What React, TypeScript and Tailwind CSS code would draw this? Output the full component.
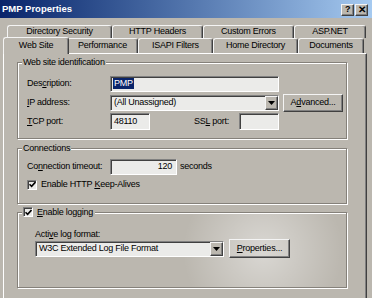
import React from 'react';

const raised = "border border-t-[#f4f4f4] border-l-[#f4f4f4] border-r-[#404040] border-b-[#404040] shadow-[inset_-1px_-1px_0_#808080]";
const sunken = "border border-t-[#808080] border-l-[#808080] border-r-white border-b-white shadow-[inset_1px_1px_0_#404040] bg-[#ebebe9]";

const U = ({ children }: { children: React.ReactNode }) => <span className="underline underline-offset-[1px]">{children}</span>;

const Arrow = () => (
    <div className={`${raised} w-[13px] h-full bg-[#bbb7af] flex items-center justify-center`}>
        <svg width="7" height="4" viewBox="0 0 7 4"><path d="M0 0h7L3.5 4z" fill="#000" /></svg>
    </div>
);

const Check = () => (
    <div className={`${sunken} w-[10px] h-[10px] flex items-center justify-center shrink-0`}>
        <svg width="7" height="7" viewBox="0 0 7 7"><path d="M0.5 3.2 L2.6 5.3 L6.5 1" stroke="#000" strokeWidth="1.6" fill="none" /></svg>
    </div>
);

const Tab = ({ label, w, h = "h-[13px]" }: { label: string, w: string, h?: string }) => (
    <div className={`${w} ${h} border-t border-l border-[#f4f4f4] border-r border-r-[#404040] rounded-t-[3px] shadow-[inset_-1px_0_0_#808080] flex items-center justify-center`}>
        {label}
    </div>
);

const Group = ({ label, h, className = "", children }: any) => (
    <div className={`relative w-[330px] ${h} border border-[#85817a] shadow-[inset_1px_1px_0_#fff,1px_1px_0_#fff] ${className}`}>
        <div className="absolute left-[4px] -top-[7px] px-[1px] bg-[#bbb7af] leading-[12px] flex items-center gap-[4px]">{label}</div>
        {children}
    </div>
);

export default function App() {
    return (
        <div className="w-[372px] h-[298px] overflow-hidden bg-[#bbb7af] text-black text-[9px] tracking-[-0.25px] font-['Liberation_Sans',Arial,sans-serif]">
            <div className="h-[18px] bg-gradient-to-r from-[#0a246a] to-[#a6caf0] flex items-center justify-between pl-[2px] pr-[4px]">
                <span className="text-white font-bold text-[9.5px] tracking-normal">PMP Properties</span>
                <div className="flex gap-[1px] pt-[1px]">
                    <div className={`${raised} bg-[#bbb7af] w-[13px] h-[12px] flex items-center justify-center font-bold text-[9px] leading-none`}>?</div>
                    <div className={`${raised} bg-[#bbb7af] w-[13px] h-[12px] flex items-center justify-center font-bold text-[10px] leading-none`}>✕</div>
                </div>
            </div>

            <div className="flex ml-[7px] mt-[7px]">
                <Tab label="Directory Security" w="w-[105px]" />
                <Tab label="HTTP Headers" w="w-[91px]" />
                <Tab label="Custom Errors" w="w-[91px]" />
                <Tab label="ASP.NET" w="w-[72px]" />
            </div>
            <div className="flex items-end h-[15px] ml-[3px]">
                <div className="relative z-10 w-[66px] h-[17px] -mb-[1px] -mr-[2px] bg-[#bbb7af] border-t border-l border-[#f4f4f4] border-r border-r-[#404040] rounded-t-[3px] shadow-[inset_-1px_0_0_#808080] flex items-center justify-center pb-[1px]">
                    Web Site
                </div>
                <Tab label="Performance" w="w-[71px]" h="h-[15px]" />
                <Tab label="ISAPI Filters" w="w-[75px]" h="h-[15px]" />
                <Tab label="Home Directory" w="w-[85px]" h="h-[15px]" />
                <Tab label="Documents" w="w-[66px]" h="h-[15px]" />
            </div>

            <div className="ml-[3px] w-[364px] h-[260px] border-t border-l border-white border-r border-r-[#404040] shadow-[inset_-1px_0_0_#808080] pl-[13px] pt-[8px]">
                <Group label="Web site identification" h="h-[77px]">
                    <div className="pt-[11px] pl-[9px]">
                        <div className="flex items-center h-[19px]">
                            <div className="w-[83px]">Des<U>c</U>ription:</div>
                            <div className={`${sunken} w-[169px] h-[16px] flex items-center pl-[2px]`}>
                                <span className="bg-[#0a246a] text-white leading-[11px] px-[1px]">PMP</span>
                            </div>
                        </div>
                        <div className="flex items-center h-[19px]">
                            <div className="w-[83px]"><U>I</U>P address:</div>
                            <div className={`${sunken} w-[169px] h-[16px] flex items-center justify-between`}>
                                <span className="pl-[3px]">(All Unassigned)</span>
                                <Arrow />
                            </div>
                            <div className={`${raised} ml-[4px] w-[60px] h-[18px] flex items-center justify-center`}>A<U>d</U>vanced...</div>
                        </div>
                        <div className="flex items-center h-[19px]">
                            <div className="w-[83px]"><U>T</U>CP port:</div>
                            <div className={`${sunken} w-[40px] h-[17px] flex items-center pl-[3px]`}>48110</div>
                            <div className="ml-[44px] w-[45px]">SS<U>L</U> port:</div>
                            <div className={`${sunken} w-[40px] h-[17px]`} />
                        </div>
                    </div>
                </Group>

                <Group label="Connections" h="h-[56px]" className="mt-[9px]">
                    <div className="pt-[8px] pl-[9px]">
                        <div className="flex items-center h-[19px]">
                            <div className="w-[83px]">Co<U>n</U>nection timeout:</div>
                            <div className={`${sunken} w-[67px] h-[16px] flex items-center justify-end pr-[4px]`}>120</div>
                            <div className="ml-[3px]">seconds</div>
                        </div>
                        <div className="flex items-center h-[17px] gap-[4px]">
                            <Check />
                            <span>Enable HTTP <U>K</U>eep-Alives</span>
                        </div>
                    </div>
                </Group>

                <Group
                    label={<><Check /><span className="pr-[1px]"><U>E</U>nable logging</span></>}
                    h="h-[76px]"
                    className="mt-[8px] bg-[radial-gradient(circle_at_245px_38px,rgba(255,255,255,0.45),rgba(255,255,255,0)_80px)]"
                >
                    <div className="pt-[16px] pl-[17px]">
                        <div className="h-[10px] leading-[10px]">Acti<U>v</U>e log format:</div>
                        <div className="flex items-center h-[19px]">
                            <div className={`${sunken} w-[189px] h-[16px] flex items-center justify-between`}>
                                <span className="pl-[3px]">W3C Extended Log File Format</span>
                                <Arrow />
                            </div>
                            <div className={`${raised} ml-[5px] w-[61px] h-[19px] flex items-center justify-center`}><U>P</U>roperties...</div>
                        </div>
                    </div>
                </Group>
            </div>
        </div>
    );
}
